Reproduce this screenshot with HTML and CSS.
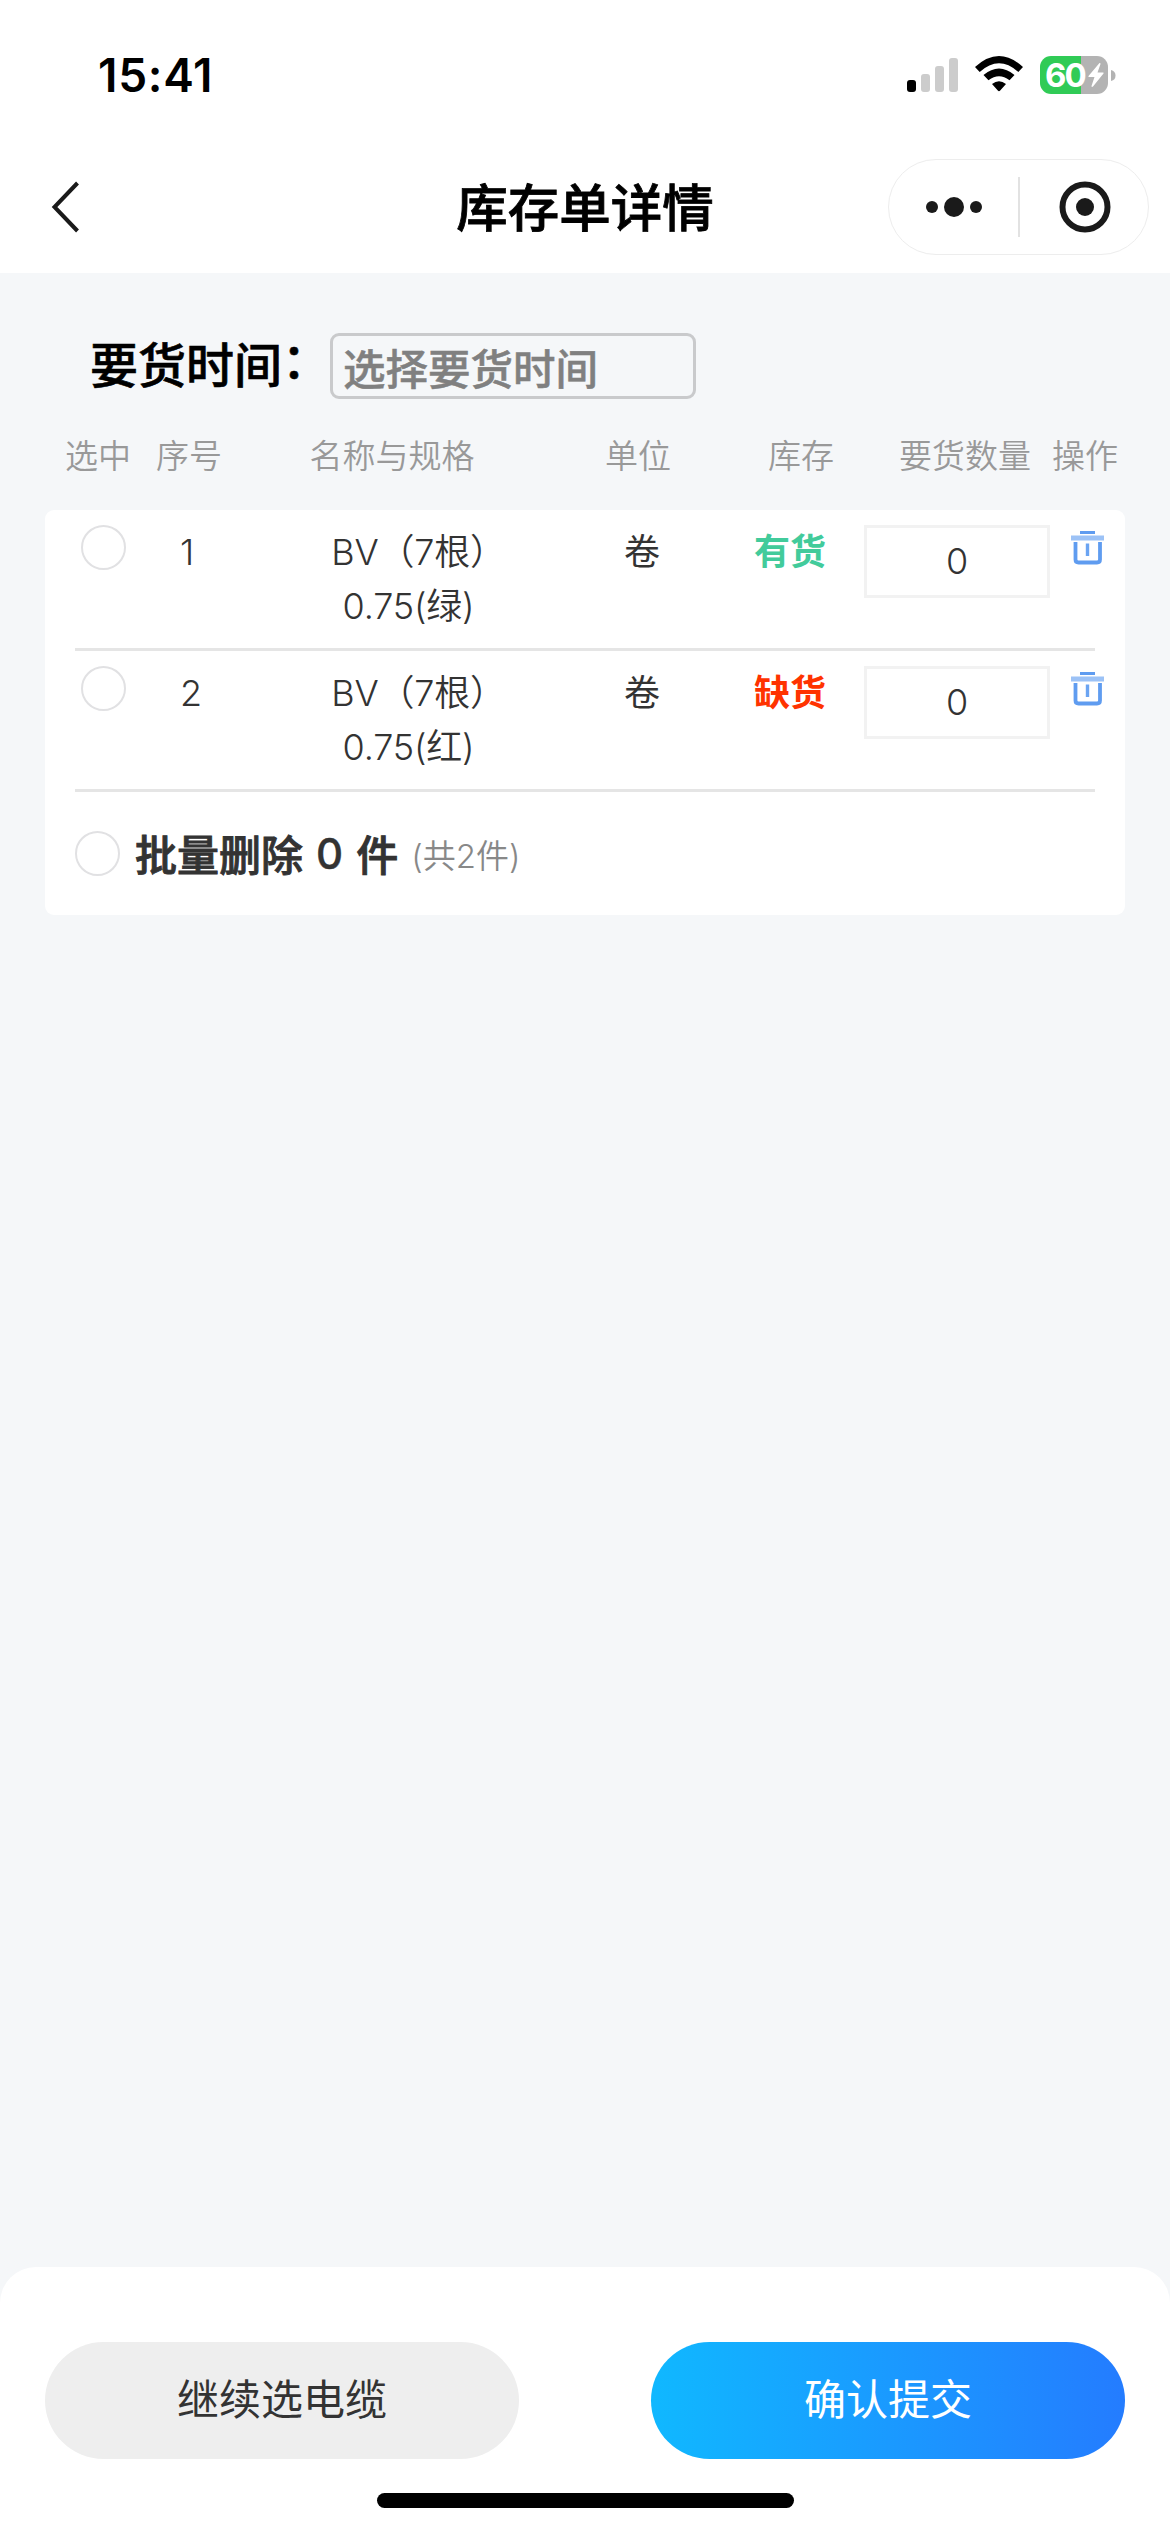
FILE: index.html
```html
<!DOCTYPE html>
<html lang="zh-CN">
<head>
<meta charset="utf-8">
<title>库存单详情</title>
<link rel="stylesheet" href="styles.css">
</head>
<body>
<div class="screen">
  <header class="top">
    <div class="status">
      <span class="clock">15:41</span>
      <div class="indicators">
        <svg class="signal" width="51" height="34" viewBox="0 0 51 34">
          <rect x="0" y="22" width="9" height="12" rx="3" fill="#000"/>
          <rect x="14" y="16" width="9" height="18" rx="3" fill="#ccc"/>
          <rect x="28" y="8" width="9" height="26" rx="3" fill="#ccc"/>
          <rect x="42" y="0" width="9" height="34" rx="3" fill="#ccc"/>
        </svg>
        <svg class="wifi" width="48" height="36" viewBox="0 0 48 36">
          <path d="M0 11 Q24 -11 48 11 L43.300 16 Q24 -1.500 4.700 16 Z"/>
          <path d="M8.500 19 Q24 6 39.500 19 L34.500 24.300 Q24 16 13.500 24.300 Z"/>
          <path d="M17 28 Q24 22.500 31 28 L25.200 34.500 Q24 36 22.800 34.500 Z"/>
        </svg>
        <div class="battery">
          <span class="level">60</span>
          <svg class="bolt" width="18" height="26" viewBox="0 0 18 26"><path d="M12.500 1 L1.500 14 Q1 15 2 15 L7.500 15 L4.500 24 Q4.500 25.500 6 24.500 L16.500 11.500 Q17 10.500 16 10.500 L10.500 10.500 L13.500 2 Q13.500 0.500 12.500 1 Z" fill="#fff"/></svg>
          <svg class="nub" width="5" height="11" viewBox="0 0 5 11"><path d="M0 0 Q4.500 1 4.500 5.500 Q4.500 10 0 11 Z" fill="#b3b3b3"/></svg>
        </div>
      </div>
    </div>
    <nav class="nav">
      <svg class="back" width="30" height="52" viewBox="0 0 30 52"><path d="M26.500 2 L3.500 26 L26.500 50" fill="none" stroke="#1a1a1a" stroke-width="4"/></svg>
      <h1 class="title">库存单详情</h1>
      <div class="capsule">
        <svg class="more" width="56" height="20" viewBox="0 0 56 20"><circle cx="6" cy="10" r="6"/><circle cx="28" cy="10" r="10"/><circle cx="50" cy="10" r="6"/></svg>
        <i class="split"></i>
        <svg class="target" width="52" height="52" viewBox="0 0 52 52"><circle cx="26" cy="26" r="22.500" fill="none" stroke="#1a1a1a" stroke-width="6"/><circle cx="26" cy="26" r="9"/></svg>
      </div>
    </nav>
  </header>

  <main class="content">
    <div class="time-row">
      <span class="time-label">要货时间<span class="colon">：</span></span>
      <div class="picker">选择要货时间</div>
    </div>
    <div class="head">
      <span>选中</span><span>序号</span><span>名称与规格</span><span>单位</span><span>库存</span><span>要货数量</span><span>操作</span>
    </div>
    <section class="card">
      <div class="row">
        <i class="radio"></i>
        <span class="index">1</span>
        <div class="name"><p class="model">BV（7根）</p><p>0.75(绿)</p></div>
        <span class="unit">卷</span>
        <span class="stock in">有货</span>
        <div class="qty">0</div>
        <svg class="trash" width="33" height="34" viewBox="0 0 33 34">
          <path d="M9 1.500 H24" stroke="#5f9cf0" stroke-width="3"/>
          <path d="M0 7 H33" stroke="#9cc2f6" stroke-width="5"/>
          <path d="M4.500 11 V28.500 Q4.500 31.500 7.500 31.500 H26 Q29 31.500 29 28.500 V11" fill="none" stroke="#5f9cf0" stroke-width="3.800"/>
          <path d="M16.500 12.500 V25" stroke="#6ba4f2" stroke-width="3.400"/>
        </svg>
      </div>
      <hr class="rule">
      <div class="row">
        <i class="radio"></i>
        <span class="index">2</span>
        <div class="name"><p class="model">BV（7根）</p><p>0.75(红)</p></div>
        <span class="unit">卷</span>
        <span class="stock out">缺货</span>
        <div class="qty">0</div>
        <svg class="trash" width="33" height="34" viewBox="0 0 33 34">
          <path d="M9 1.500 H24" stroke="#5f9cf0" stroke-width="3"/>
          <path d="M0 7 H33" stroke="#9cc2f6" stroke-width="5"/>
          <path d="M4.500 11 V28.500 Q4.500 31.500 7.500 31.500 H26 Q29 31.500 29 28.500 V11" fill="none" stroke="#5f9cf0" stroke-width="3.800"/>
          <path d="M16.500 12.500 V25" stroke="#6ba4f2" stroke-width="3.400"/>
        </svg>
      </div>
      <hr class="rule">
      <div class="batch">
        <i class="radio"></i>
        <span class="batch-text">批量删除</span>
        <span class="batch-count">0</span>
        <span class="batch-unit">件</span>
        <span class="total">(共2件)</span>
      </div>
    </section>
  </main>

  <footer class="bottom">
    <div class="actions">
      <div class="btn plain">继续选电缆</div>
      <div class="btn primary">确认提交</div>
    </div>
    <i class="home"></i>
  </footer>
</div>
</body>
</html>
```
FILE: styles.css
```css
* { box-sizing: border-box; margin: 0; padding: 0; }
body { background: #f5f7f9; font-family: Inter, "Noto Sans CJK SC", sans-serif; color: #333; }
svg { display: block; flex: none; }
.screen { width: 1170px; height: 2532px; display: flex; flex-direction: column; background: #f5f7f9; }

.top { height: 273px; background: #fff; flex: none; }
.status { height: 150px; padding: 0 62px 0 98px; display: flex; justify-content: space-between; align-items: center; }
.clock { font-size: 46px; font-weight: 600; line-height: 54px; color: #000; letter-spacing: 0.7px; }
.indicators { display: flex; align-items: center; height: 38px; }
.wifi { margin-left: 17px; margin-top: -3px; }
.battery { margin-left: 17px; width: 68px; height: 38px; border-radius: 11px; display: flex; align-items: center; padding-left: 5px; background: linear-gradient(90deg, #30cb56 0 41px, #b3b3b3 41px); position: relative; }
.signal { margin-top: 0; }
.level { font-size: 33px; line-height: 38px; font-weight: 700; color: #fff; letter-spacing: -2px; width: 42px; }
.nub { position: absolute; left: 71px; top: 14px; }

.nav { height: 114px; display: grid; grid-template-columns: 282px 606px 261px; align-items: center; }
.back { margin-left: 51px; }
.title { text-align: center; font-size: 51.500px; line-height: 76px; padding-top: 2px; font-weight: 500; color: #000; -webkit-text-stroke: 0.8px #000; }
.capsule { width: 261px; height: 96px; border: 1.5px solid #ededed; border-radius: 48px; display: flex; align-items: center; padding-left: 37px; }
.split { width: 2px; height: 60px; background: #e2e2e2; margin-left: 36px; }
.more, .target { fill: #1a1a1a; }
.target { margin-left: 39px; }

.content { flex: 1; padding: 60px 45px 0; }
.time-row { display: flex; align-items: center; height: 66px; padding-left: 45px; }
.time-label { width: 240px; flex: none; white-space: nowrap; font-size: 48px; line-height: 66px; font-weight: 500; color: #000; -webkit-text-stroke: 0.6px #000; }
.colon { position: relative; top: -5px; }
.picker { width: 366px; flex: none; height: 66px; border: 3px solid #c9cacc; border-radius: 9px; padding: 4px 0 0 10px; font-size: 42.500px; line-height: 60px; font-weight: 500; color: #808080; -webkit-text-stroke: 0.5px #808080; }
.head { display: grid; grid-template-columns: 106px 76px 330px 162px 164px 164px 76px; text-align: center; font-size: 33px; line-height: 48px; margin-top: 33px; height: 78px; color: #999; white-space: nowrap; font-weight: 350; }

.card { background: #fff; border-radius: 9px; height: 405px; }
.row { height: 138px; padding-top: 15px; display: grid; grid-template-columns: 117px 78px 336px 132px 156px 186px 75px; font-size: 36px; line-height: 54px; align-items: start; }
.radio { display: block; width: 45px; height: 45px; border: 2.500px solid #e1e1e3; border-radius: 50%; background: #fff; flex: none; }
.row .radio { margin-left: 36px; }
.index { padding-left: 18px; font-weight: 350; }
.name { text-align: center; padding-left: 1px; }
.name p { font-weight: 350; letter-spacing: -0.2px; }
.name .model { padding-left: 20px; white-space: nowrap; }
.unit { text-align: center; }
.stock { text-align: center; padding-left: 8px; font-weight: 600; }
.in { color: #42cb9b; }
.out { color: #ff3300; }
.qty { height: 73px; border: 3px solid #f2f2f2; text-align: center; line-height: 67px; font-weight: 350; }
.trash { margin: 6px 0 0 21px; }
.rule { height: 3px; border: 0; margin: 0 30px; background: #e5e5e5; }
.batch { height: 123px; padding-left: 30px; display: flex; align-items: center; font-size: 42px; font-weight: 500; -webkit-text-stroke: 0.9px #333; }
.batch-text { margin: -3px 0 0 15px; }
.batch-count { margin-left: 13px; -webkit-text-stroke: 0.4px #333; }
.batch-unit { margin: -3px 0 0 13px; }
.total { margin-left: 13px; font-size: 33px; font-weight: 350; color: #888; -webkit-text-stroke: 0; }

.bottom { height: 265px; background: #fff; border-radius: 36px 36px 0 0; padding: 75px 45px 0; flex: none; }
.actions { display: flex; justify-content: space-between; }
.btn { width: 474px; height: 117px; border-radius: 59px; text-align: center; font-size: 42px; line-height: 115px; }
.plain { background: #eee; color: #333; }
.primary { background: linear-gradient(90deg, #10b8ff, #247cff); color: #fff; }
.home { display: block; width: 417px; height: 15px; border-radius: 8px; background: #000; margin: 34px auto 0; }
```
